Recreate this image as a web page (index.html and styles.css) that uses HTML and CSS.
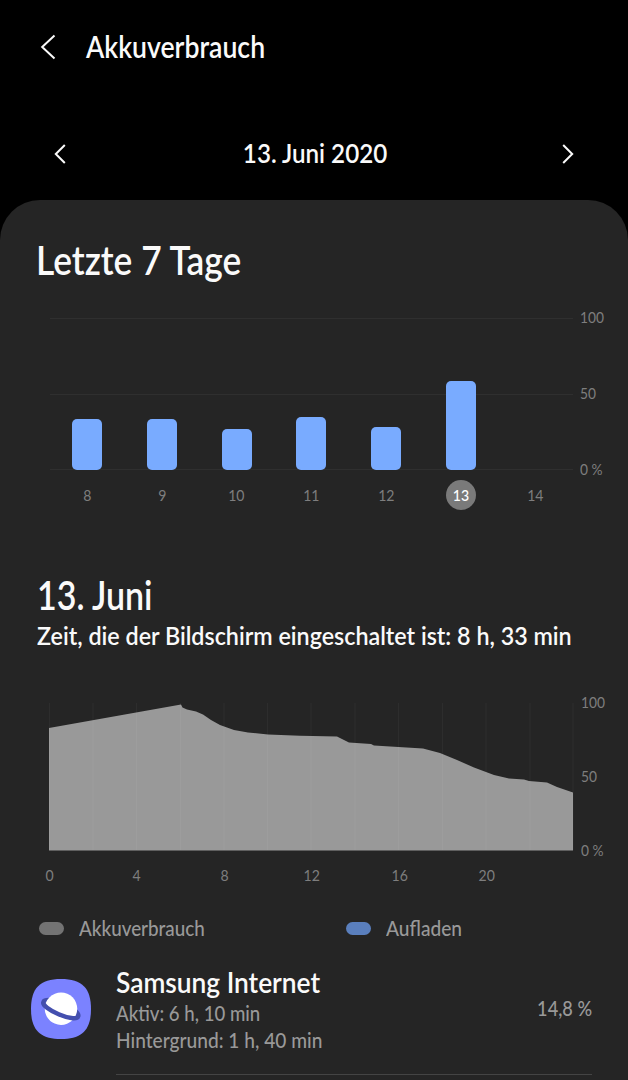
FILE: index.html
```
<!DOCTYPE html>
<html lang="de">
<head>
    <meta charset="UTF-8">
    <meta name="viewport" content="width=device-width, initial-scale=1.0">
    <title>Akkuverbrauch</title>
    <link rel="stylesheet" href="styles.css">
</head>
<body>
    <header class="header">
        <svg class="back" width="16" height="26" viewBox="0 0 16 26"><path d="M14.5 1.5L2.2 13l12.3 11.5"/></svg>
        <h1 class="title">Akkuverbrauch</h1>
    </header>

    <nav class="date-nav">
        <svg width="12" height="20" viewBox="0 0 12 20"><path d="M10.8 1L1.8 10l9 9"/></svg>
        <span class="date">13. Juni 2020</span>
        <svg width="12" height="20" viewBox="0 0 12 20"><path d="M1.2 1l9 9-9 9"/></svg>
    </nav>

    <main class="panel">
        <h2 class="heading">Letzte 7 Tage</h2>

        <div class="week">
            <div class="week-plot">
                <div class="bar" style="height: 33.5%"></div>
                <div class="bar" style="height: 33.8%"></div>
                <div class="bar" style="height: 27.3%"></div>
                <div class="bar" style="height: 35%"></div>
                <div class="bar" style="height: 28.4%"></div>
                <div class="bar" style="height: 58.3%"></div>
                <div class="bar" style="height: 0%"></div>
            </div>
            <div class="scale">
                <span>100</span>
                <span>50</span>
                <span>0 %</span>
            </div>
        </div>
        <div class="week-days">
            <span>8</span>
            <span>9</span>
            <span>10</span>
            <span>11</span>
            <span>12</span>
            <span class="selected"><b>13</b></span>
            <span>14</span>
        </div>

        <h2 class="heading day-heading">13. Juni</h2>
        <p class="screen-time">Zeit, die der Bildschirm eingeschaltet ist: 8 h, 33 min</p>

        <div class="day">
            <svg class="day-plot" width="525" height="148" viewBox="0 0 525 148">
                <path class="area" d="M0 25L132 1.500L133.500 4.500L138 6.500L147 8.500L154 11.500L162 17L171 22L185 27L199 29.500L219 31.500L251 32.800L288 33.500L300 39.500L322 41L325 42.500L374 45.500L391 50L408 57L425 64.500L445 72L460 75.500L475 76.500L480 78L498 79.500L508 84L524 89.500V147.500H0z"/>
                <path class="grid" d="M.5 0v147M44 0v147M87.500 0v147M131.500 0v147M175 0v147M218.500 0v147M262 0v147M306 0v147M349.500 0v147M393.500 0v147M437 0v147M481 0v147M524 0v147"/>
            </svg>
            <div class="scale">
                <span>100</span>
                <span>50</span>
                <span>0 %</span>
            </div>
        </div>
        <div class="day-hours">
            <span>0</span>
            <span>4</span>
            <span>8</span>
            <span>12</span>
            <span>16</span>
            <span>20</span>
        </div>

        <div class="legend">
            <div class="legend-item"><i class="dot"></i><span class="usage-label">Akkuverbrauch</span></div>
            <div class="legend-item"><i class="dot blue"></i><span class="charge-label">Aufladen</span></div>
        </div>

        <div class="app">
            <svg class="app-icon" width="60" height="60" viewBox="0 0 60 60">
                <path fill="#7b82ff" d="M30 0C51 0 60 9 60 30S51 60 30 60 0 51 0 30 9 0 30 0z"/>
                <g transform="translate(30 29.700) rotate(23)">
                    <ellipse rx="21" ry="8" fill="#444fae"/>
                    <circle r="16.200" fill="#fff"/>
                    <path fill="none" stroke="#444fae" stroke-width="4.500" d="M-18.700 1A18.700 5 0 0 0 18.700 1"/>
                </g>
            </svg>
            <div class="app-info">
                <div class="app-text">
                    <div class="app-name">Samsung Internet</div>
                    <div class="app-active">Aktiv: 6 h, 10 min</div>
                    <div class="app-background">Hintergrund: 1 h, 40 min</div>
                </div>
                <div class="app-percent">14,8 %</div>
            </div>
        </div>
    </main>
</body>
</html>
```
FILE: styles.css
```
* {
    box-sizing: border-box;
}
body {
    margin: 0;
    height: 1080px;
    overflow: hidden;
    background-color: #000;
    color: #fafafa;
    font-family: Lato, sans-serif;
    font-weight: 500;
    white-space: nowrap;
}
h1, h2, p {
    margin: 0;
}
svg {
    display: block;
    flex: none;
}

/* top bar */
.header {
    display: flex;
    align-items: center;
    height: 94px;
    padding-left: 40px;
}
.back path, .date-nav path {
    fill: none;
    stroke: #fafafa;
    stroke-width: 2;
}
.title {
    margin: 0 0 2px 30px;
    font-size: 31.5px;
    line-height: 40px;
    font-weight: 600;
    transform: scaleX(0.845);
    transform-origin: left;
}
.date-nav {
    display: flex;
    align-items: center;
    justify-content: space-between;
    height: 92px;
    margin-top: 14px;
    padding: 0 54px;
}
.date {
    margin: 0 0 3px 3px;
    font-size: 27.5px;
    font-weight: 600;
    transform: scaleX(0.88);
}

/* panel */
.panel {
    height: 880px;
    padding: 40px 36px 0;
    border-radius: 40px 40px 0 0;
    background-color: #252525;
}
.heading {
    font-size: 39.5px;
    line-height: 40px;
    font-weight: 600;
    transform: scaleX(0.895);
    transform-origin: left;
}

/* bar chart */
.week, .day {
    display: flex;
}
.week {
    margin: 38px 0 0 14px;
}
.week-plot {
    display: flex;
    flex: none;
    align-items: flex-end;
    justify-content: space-around;
    width: 523px;
    height: 152px;
    background: linear-gradient(#2f2f2f, #2f2f2f) 0 0 / 100% 1px no-repeat,
        linear-gradient(#2f2f2f, #2f2f2f) 0 50% / 100% 1px no-repeat,
        linear-gradient(#2f2f2f, #2f2f2f) 0 100% / 100% 1px no-repeat;
}
.bar {
    width: 30px;
    border-radius: 5px;
    background-color: #79abff;
}
.scale {
    display: flex;
    flex-direction: column;
    justify-content: space-between;
    margin: -11px 0 -9px 7px;
    color: #7e7e7e;
    font-size: 16px;
    line-height: 20px;
    font-weight: 400;
    transform: scaleX(0.86);
    transform-origin: left;
}
.week-days {
    display: grid;
    grid-template-columns: repeat(7, 1fr);
    width: 523px;
    margin: 10px 0 0 14px;
    color: #7e7e7e;
    font-size: 16px;
    line-height: 30px;
    font-weight: 400;
    text-align: center;
}
.week-days span:not(.selected), .selected b {
    transform: scaleX(0.88);
}
.selected {
    width: 30px;
    margin: 0 auto;
    border-radius: 50%;
    background-color: #7a7a7a;
    color: #fff;
}
.selected b {
    display: block;
    font-weight: 500;
}

/* area chart */
.day-heading {
    margin: 65px 0 0 1px;
    transform: scaleX(0.86);
}
.screen-time {
    margin: 4px 0 0 1px;
    font-size: 25.5px;
    line-height: 32px;
    font-weight: 600;
    transform: scaleX(0.914);
    transform-origin: left;
}
.day {
    margin: 52px 0 0 13px;
}
.area {
    fill: #999;
}
.grid {
    fill: none;
    stroke: #fff;
    stroke-opacity: 0.04;
}
.day .scale {
    margin-left: 7px;
}
.day-hours {
    display: grid;
    grid-template-columns: repeat(6, 87.4px);
    margin: 14px 0 0 -30px;
    color: #7e7e7e;
    font-size: 16px;
    line-height: 20px;
    font-weight: 400;
    text-align: center;
}
.day-hours span {
    transform: scaleX(0.88);
}

/* legend */
.legend {
    display: grid;
    grid-template-columns: 306.5px 1fr;
    margin: 29px 0 0 3px;
    color: #999;
    font-size: 21.5px;
    line-height: 28px;
}
.legend-item {
    display: flex;
    align-items: center;
    gap: 15px;
}
.dot {
    width: 25px;
    height: 13px;
    border-radius: 7px;
    background-color: #737373;
}
.blue {
    background-color: #5a7fbd;
}
.usage-label, .charge-label {
    transform: scaleX(0.875);
    transform-origin: left;
}
.charge-label {
    transform: scaleX(0.89);
}

/* app row */
.app {
    display: flex;
    margin: 24px 0 0 -5px;
}
.app-icon {
    margin-top: 13px;
}
.app-info {
    display: flex;
    justify-content: space-between;
    flex: 1;
    height: 109px;
    margin-left: 25px;
    border-bottom: 1px solid #444;
}
.app-text div {
    color: #999;
    font-size: 21.5px;
    line-height: 27px;
    transform-origin: left;
}
.app-text .app-name {
    margin-bottom: 2px;
    color: #fafafa;
    font-size: 28px;
    line-height: 32px;
    font-weight: 600;
    transform: scaleX(0.94);
}
.app-text .app-active {
    transform: scaleX(0.865);
}
.app-text .app-background {
    transform: scaleX(0.89);
}
.app-percent {
    margin-top: 28px;
    color: #999;
    font-size: 21.5px;
    line-height: 28px;
    transform: scaleX(0.845);
    transform-origin: right;
}
```
